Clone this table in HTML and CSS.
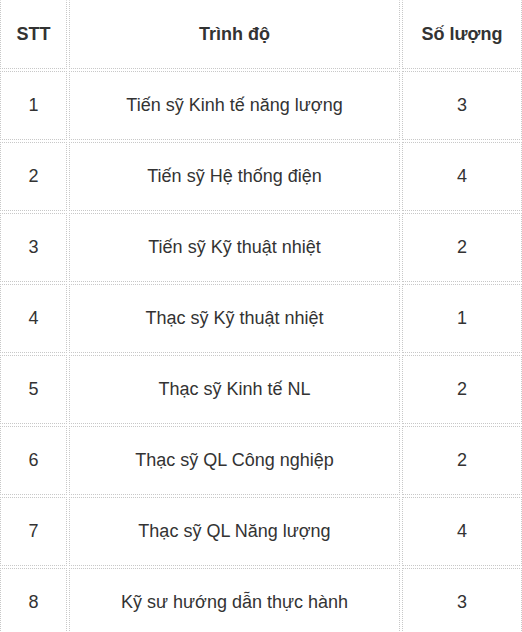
FILE: index.html
```html
<!DOCTYPE html>
<html lang="vi">
<head>
<meta charset="utf-8">
<link rel="stylesheet" href="styles.css">
</head>
<body>
<table class="staff-table">
  <colgroup>
    <col class="col-stt">
    <col class="col-level">
    <col class="col-count">
  </colgroup>
  <thead>
    <tr><th>STT</th><th>Trình độ</th><th>Số lượng</th></tr>
  </thead>
  <tbody>
    <tr><td>1</td><td>Tiến sỹ Kinh tế năng lượng</td><td>3</td></tr>
    <tr><td>2</td><td>Tiến sỹ Hệ thống điện</td><td>4</td></tr>
    <tr><td>3</td><td>Tiến sỹ Kỹ thuật nhiệt</td><td>2</td></tr>
    <tr><td>4</td><td>Thạc sỹ Kỹ thuật nhiệt</td><td>1</td></tr>
    <tr><td>5</td><td>Thạc sỹ Kinh tế NL</td><td>2</td></tr>
    <tr><td>6</td><td>Thạc sỹ QL Công nghiệp</td><td>2</td></tr>
    <tr><td>7</td><td>Thạc sỹ QL Năng lượng</td><td>4</td></tr>
    <tr><td>8</td><td>Kỹ sư hướng dẫn thực hành</td><td>3</td></tr>
  </tbody>
</table>
</body>
</html>
```

FILE: styles.css
```css
html, body {
  margin: 0;
  padding: 0;
  background: #ffffff;
  overflow: hidden;
}
.staff-table {
  border-collapse: separate;
  border-spacing: 2px;
  table-layout: fixed;
  width: 526px;
  margin: -2px 0 0 -2px;
  font-family: "Liberation Sans", Arial, sans-serif;
  font-size: 18px;
  line-height: 23px;
  color: #333333;
}
.col-stt { width: 67px; }
.col-level { width: 331px; }
.col-count { width: 120px; }
.staff-table th,
.staff-table td {
  box-sizing: border-box;
  border: 1px dotted #c8c8c8;
  padding: 22px 8px;
  text-align: center;
  vertical-align: middle;
  height: 69px;
}
.staff-table th {
  font-weight: bold;
  border-top-color: transparent;
}
```
